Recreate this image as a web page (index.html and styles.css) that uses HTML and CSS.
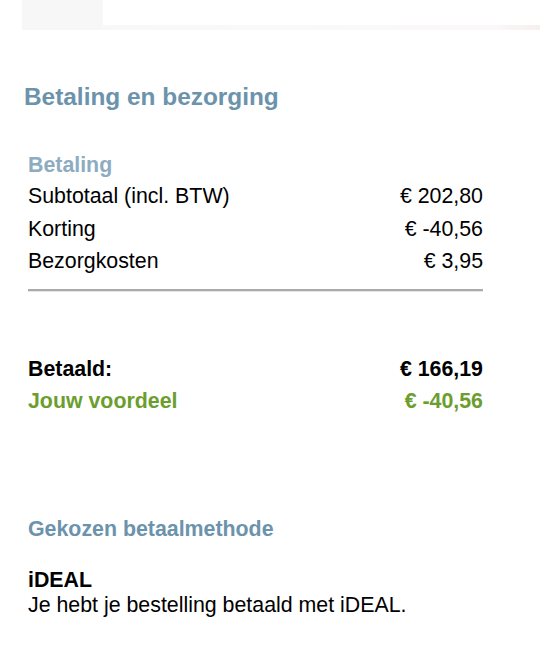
FILE: index.html
```html
<!DOCTYPE html>
<html lang="nl">
<head>
<meta charset="utf-8">
<title>Betaling en bezorging</title>
<link rel="stylesheet" href="styles.css">
</head>
<body>
<div class="topbar">
  <div class="tab"></div>
  <div class="rest"><div class="strip"></div></div>
</div>
<main class="content">
  <h2 class="title">Betaling en bezorging</h2>
  <h3 class="subtitle">Betaling</h3>
  <div class="rows">
    <div class="row"><span>Subtotaal (incl. BTW)</span><span>€ 202,80</span></div>
    <div class="row"><span>Korting</span><span>€ -40,56</span></div>
    <div class="row"><span>Bezorgkosten</span><span>€ 3,95</span></div>
  </div>
  <hr class="divider">
  <div class="totals">
    <div class="row bold"><span>Betaald:</span><span>€ 166,19</span></div>
    <div class="row bold green"><span>Jouw voordeel</span><span>€ -40,56</span></div>
  </div>
  <h3 class="method-title">Gekozen betaalmethode</h3>
  <div class="method">
    <div class="method-name">iDEAL</div>
    <div class="method-text">Je hebt je bestelling betaald met iDEAL.</div>
  </div>
</main>
</body>
</html>
```
FILE: styles.css
```css
html, body {
  margin: 0;
  padding: 0;
  background: #ffffff;
  font-family: "Liberation Sans", Arial, Helvetica, sans-serif;
  color: #000000;
}

.topbar {
  display: flex;
  margin-left: 22px;
  height: 30px;
}

.tab {
  width: 81px;
  background: #f7f7f7;
}

.rest {
  flex: 1;
  display: flex;
  flex-direction: column;
  justify-content: flex-end;
}

.strip {
  height: 5px;
  background: linear-gradient(to right, #f9f8f8 0%, #faf8f8 90%, #f8eeee 100%);
}

.content {
  padding-left: 28px;
  width: 455px;
}

.title {
  margin: 52.7px 0 0 -4px;
  font-size: 24.4px;
  line-height: 28px;
  font-weight: bold;
  color: #6b93ab;
}

.subtitle {
  margin: 42.5px 0 0 0;
  font-size: 21.35px;
  line-height: 24px;
  font-weight: bold;
  color: #8eacbf;
}

.rows {
  margin-top: 3.1px;
}

.row {
  display: flex;
  justify-content: space-between;
  font-size: 21.35px;
  line-height: 32.5px;
}

.divider {
  margin: 11.4px 0 0 0;
  border: 0;
  height: 2px;
  background: #ababab;
  box-shadow: 0 1px 0 #e4e4e4;
}

.totals {
  margin-top: 61.5px;
}

.bold {
  font-weight: bold;
}

.green {
  color: #6b9e2e;
}

.method-title {
  margin: 99.3px 0 0 0;
  font-size: 21.35px;
  line-height: 24px;
  font-weight: bold;
  color: #6b93ab;
}

.method {
  margin-top: 27px;
  font-size: 21.35px;
  line-height: 25px;
}

.method-name {
  font-weight: bold;
}
```
